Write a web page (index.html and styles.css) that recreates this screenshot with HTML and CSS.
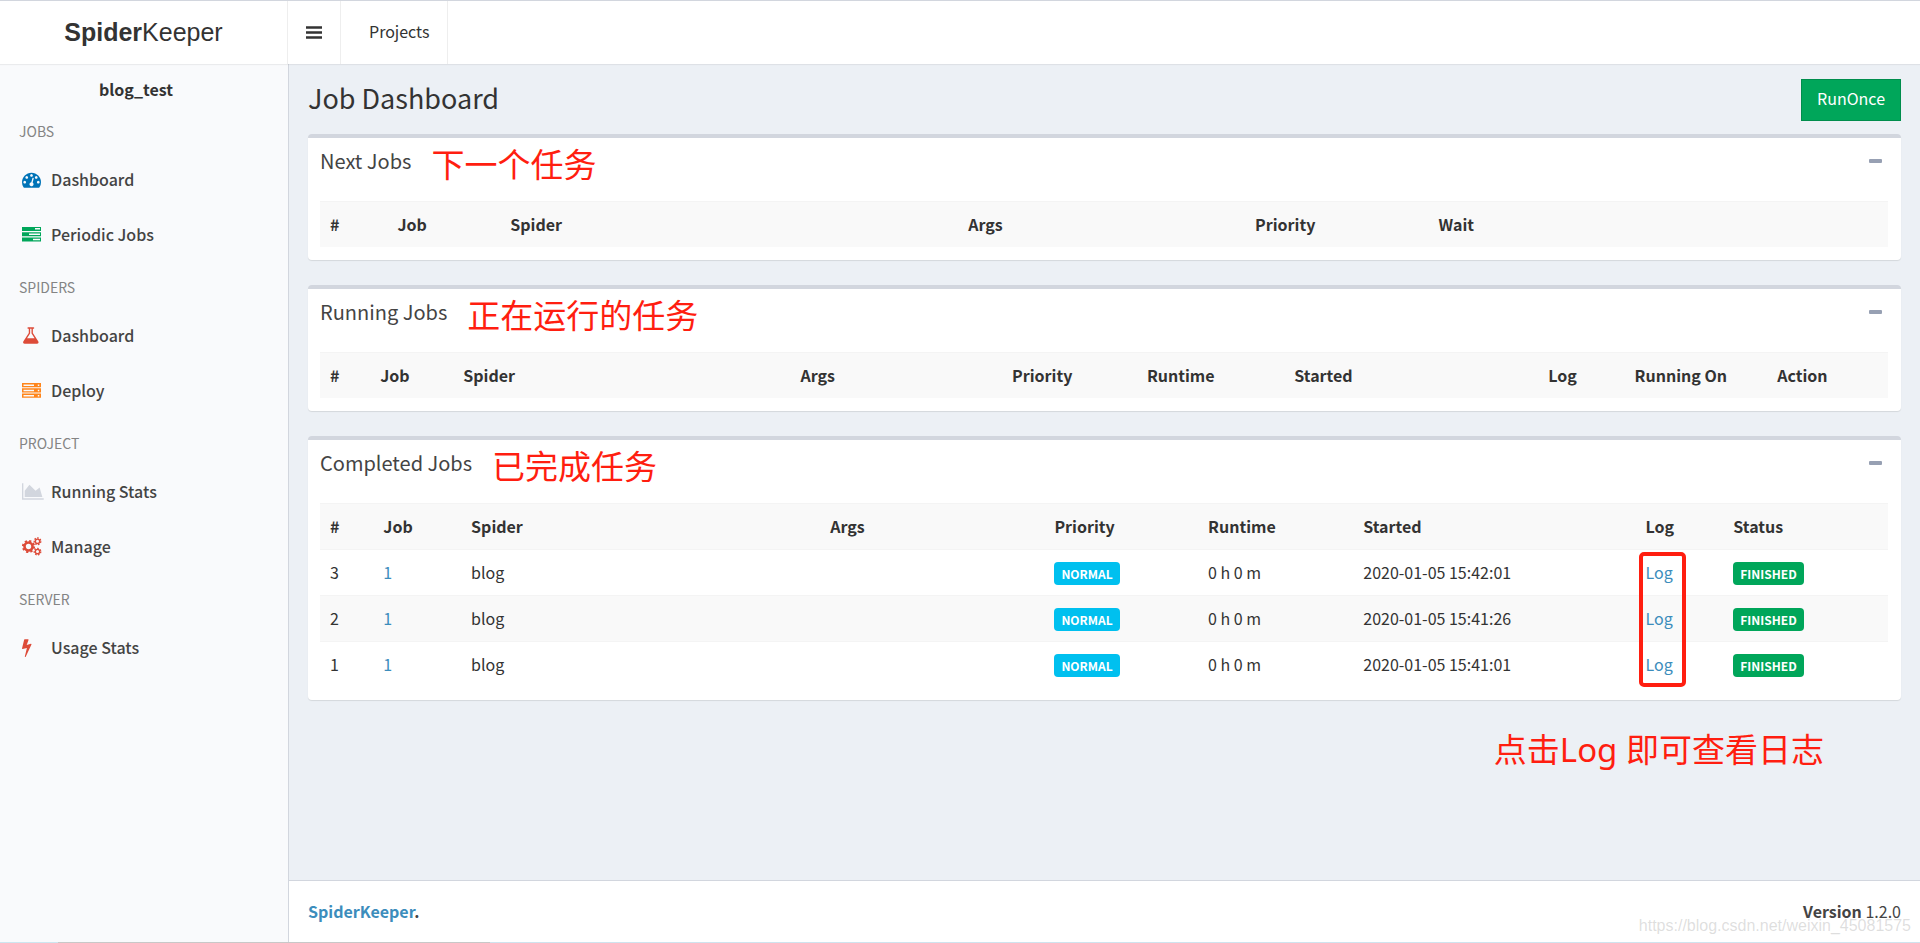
FILE: index.html
```html
<!DOCTYPE html>
<html lang="en">
<head>
<meta charset="utf-8">
<title>SpiderKeeper</title>
<link rel="stylesheet" href="styles.css">
</head>
<body>
<div class="wrapper">
  <header class="main-header">
    <a class="logo" href="#"><b>Spider</b>Keeper</a>
    <nav class="navbar">
      <button class="toggle" type="button" aria-label="Toggle navigation">
        <svg class="bars" viewBox="0 0 16 13"><path d="M0 0.300h16v2.400H0zM0 5.300h16v2.400H0zM0 10.300h16v2.400H0z"/></svg>
      </button>
      <a class="nav-link" href="#">Projects</a>
    </nav>
  </header>
  <div class="columns">
    <aside class="sidebar">
      <p class="user-panel">blog_test</p>
      <ul class="menu">
        <li class="menu-header">JOBS</li>
        <li><a class="menu-item" href="#"><span class="slot blue"><svg class="icon" viewBox="0 0 1792 1792"><path d="M384 1152q0-53-37.500-90.500t-90.500-37.500-90.500 37.500-37.500 90.500 37.500 90.500 90.500 37.500 90.500-37.500 37.500-90.500zm192-448q0-53-37.500-90.500t-90.500-37.500-90.500 37.500-37.500 90.500 37.500 90.500 90.500 37.500 90.500-37.500 37.500-90.500zm428 481l101-382q6-26-7.500-48.500t-38.500-29.500-48 6.500-30 39.500l-101 382q-60 5-107 43.500t-63 98.500q-20 77 20 146t117 89 146-20 89-117q16-60-6-117t-72-91zm660-33q0-53-37.500-90.500t-90.500-37.500-90.500 37.500-37.500 90.500 37.500 90.500 90.500 37.500 90.500-37.500 37.500-90.500zm-640-640q0-53-37.500-90.500t-90.500-37.500-90.500 37.500-37.500 90.500 37.500 90.500 90.500 37.500 90.500-37.500 37.500-90.500zm448 192q0-53-37.500-90.500t-90.500-37.500-90.500 37.500-37.500 90.500 37.500 90.500 90.500 37.500 90.500-37.500 37.500-90.500zm320 448q0 261-141 483-19 29-54 29h-1402q-35 0-54-29-141-221-141-483 0-182 71-348t191-286 286-191 348-71 348 71 286 191 191 286 71 348z"/></svg></span>Dashboard</a></li>
        <li><a class="menu-item" href="#"><span class="slot green"><svg class="icon" viewBox="0 0 19 19"><path fill-rule="evenodd" d="M0 2h19v4H0zM13 3v1.500h5V3zM0 7.200h19v4H0zM7 8.500v1.500h11V8.500zM0 12.500h19v4H0zM11 13.800v1.500h7v-1.500z"/></svg></span>Periodic Jobs</a></li>
        <li class="menu-header">SPIDERS</li>
        <li><a class="menu-item" href="#"><span class="slot red"><svg class="icon" viewBox="64 0 1664 1792"><path d="M1591 1448q56 89 21.500 152.500t-140.500 63.500h-1152q-106 0-140.500-63.500t21.500-152.500l503-793v-399h-64q-26 0-45-19t-19-45 19-45 45-19h512q26 0 45 19t19 45-19 45-45 19h-64v399zm-779-725l-272 429h712l-272-429-20-31v-436h-128v436z"/></svg></span>Dashboard</a></li>
        <li><a class="menu-item" href="#"><span class="slot orange"><svg class="icon" viewBox="0 0 19 19"><path fill-rule="evenodd" d="M0 2h19v4.300H0zM1.500 3.400v1.500h10.500V3.400zM15.800 3.400v1.500h1.500V3.400zM0 7.300h19v4.300H0zM1.500 8.700v1.500h10.500V8.700zM15.800 8.700v1.500h1.500V8.700zM0 12.500h19v4.300H0zM1.500 13.900v1.500h10.500v-1.500zM15.800 13.900v1.500h1.500v-1.500z"/></svg></span>Deploy</a></li>
        <li class="menu-header">PROJECT</li>
        <li><a class="menu-item" href="#"><span class="slot gray"><svg class="icon" viewBox="0 0 2048 1792"><path d="M2048 1536v128h-2048v-1536h128v1408h1920zm-384-1024l256 896h-1664v-576l448-576 576 576z"/></svg></span>Running Stats</a></li>
        <li><a class="menu-item" href="#"><span class="slot red"><svg class="icon" viewBox="0 0 20 19"><g fill="none" stroke="currentColor"><circle cx="6.500" cy="9.500" r="4" stroke-width="2.600"/><circle cx="6.500" cy="9.500" r="5.600" stroke-width="2" stroke-dasharray="2.200 2.198"/><circle cx="15.500" cy="4.300" r="2.200" stroke-width="1.400"/><circle cx="15.500" cy="4.300" r="3.300" stroke-width="1.300" stroke-dasharray="1.600 1.362"/><circle cx="15.500" cy="14.600" r="2.200" stroke-width="1.400"/><circle cx="15.500" cy="14.600" r="3.300" stroke-width="1.300" stroke-dasharray="1.600 1.362"/></g></svg></span>Manage</a></li>
        <li class="menu-header">SERVER</li>
        <li><a class="menu-item" href="#"><span class="slot red"><svg class="icon" viewBox="448 0 896 1792"><path d="M1333 566q18 20 7 44l-540 1157q-13 25-42 25-4 0-14-2-17-5-25.500-19t-4.500-30l197-808-406 101q-4 1-12 1-18 0-31-11-18-15-13-39l201-825q4-14 16-23t28-9h328q19 0 32 12.500t13 29.500q0 8-5 18l-171 463 396-98q8-2 12-2 19 0 34 15z"/></svg></span>Usage Stats</a></li>
      </ul>
    </aside>
    <div class="page">
      <main class="content">
        <div class="content-header">
          <h1>Job Dashboard</h1>
          <button class="run" type="button">RunOnce</button>
        </div>
        <section class="box">
          <div class="box-header"><h2>Next Jobs</h2><span class="note">下一个任务</span><button class="collapse" type="button" aria-label="Collapse"><svg class="minus" viewBox="0 0 13 4"><rect width="13" height="4" rx="1"/></svg></button></div>
          <table class="next">
            <colgroup><col class="n1"><col class="n2"><col class="n3"><col class="n4"><col class="n5"><col></colgroup>
            <tbody><tr><th>#</th><th>Job</th><th>Spider</th><th>Args</th><th>Priority</th><th>Wait</th></tr></tbody>
          </table>
        </section>
        <section class="box">
          <div class="box-header"><h2>Running Jobs</h2><span class="note">正在运行的任务</span><button class="collapse" type="button" aria-label="Collapse"><svg class="minus" viewBox="0 0 13 4"><rect width="13" height="4" rx="1"/></svg></button></div>
          <table class="running">
            <colgroup><col class="r1"><col class="r2"><col class="r3"><col class="r4"><col class="r5"><col class="r6"><col class="r7"><col class="r8"><col class="r9"><col></colgroup>
            <tbody><tr><th>#</th><th>Job</th><th>Spider</th><th>Args</th><th>Priority</th><th>Runtime</th><th>Started</th><th>Log</th><th>Running On</th><th>Action</th></tr></tbody>
          </table>
        </section>
        <section class="box">
          <div class="box-header"><h2>Completed Jobs</h2><span class="note">已完成任务</span><button class="collapse" type="button" aria-label="Collapse"><svg class="minus" viewBox="0 0 13 4"><rect width="13" height="4" rx="1"/></svg></button></div>
          <table class="completed">
            <colgroup><col class="c1"><col class="c2"><col class="c3"><col class="c4"><col class="c5"><col class="c6"><col class="c7"><col class="c8"><col></colgroup>
            <tbody>
              <tr><th>#</th><th>Job</th><th>Spider</th><th>Args</th><th>Priority</th><th>Runtime</th><th>Started</th><th>Log</th><th>Status</th></tr>
              <tr><td>3</td><td><a href="#">1</a></td><td>blog</td><td></td><td><span class="label info">NORMAL</span></td><td>0 h 0 m</td><td>2020-01-05 15:42:01</td><td class="marked"><a href="#">Log</a><span class="marker"></span></td><td><span class="label success">FINISHED</span></td></tr>
              <tr><td>2</td><td><a href="#">1</a></td><td>blog</td><td></td><td><span class="label info">NORMAL</span></td><td>0 h 0 m</td><td>2020-01-05 15:41:26</td><td><a href="#">Log</a></td><td><span class="label success">FINISHED</span></td></tr>
              <tr><td>1</td><td><a href="#">1</a></td><td>blog</td><td></td><td><span class="label info">NORMAL</span></td><td>0 h 0 m</td><td>2020-01-05 15:41:01</td><td><a href="#">Log</a></td><td><span class="label success">FINISHED</span></td></tr>
            </tbody>
          </table>
        </section>
        <p class="note hint">点击Log 即可查看日志</p>
      </main>
      <footer class="footer">
        <strong><a href="#">SpiderKeeper</a>.</strong>
        <span><b>Version</b> 1.2.0</span>
      </footer>
    </div>
  </div>
  <div class="edge"></div>
  <span class="watermark">https://blog.csdn.net/weixin_45081575</span>
</div>
</body>
</html>
```
FILE: styles.css
```css
* { box-sizing: border-box; }
body {
  margin: 0;
  font: 16px/25px "Noto Sans CJK SC", sans-serif;
  color: #333;
  background: #fff;
}
a { color: #3c8dbc; text-decoration: none; }
button { font: inherit; cursor: pointer; }
h1, h2, p, ul { margin: 0; padding: 0; font-weight: 400; }
.wrapper {
  position: relative;
  display: flex;
  flex-direction: column;
  min-height: 100vh;
  border-top: 1px solid #d2d6de;
}
.main-header {
  position: relative;
  display: flex;
  height: 63px;
  background: #fff;
  box-shadow: 0 1px 1px rgba(0, 0, 0, 0.06);
}
.logo {
  width: 288px;
  border-right: 1px solid #eee;
  font: 25px/62px "Liberation Sans", Arial, sans-serif;
  text-align: center;
  color: #333;
}
.navbar { display: flex; }
.toggle {
  display: flex;
  align-items: center;
  padding: 0 18px;
  border: 0;
  border-right: 1px solid #eee;
  background: none;
  color: #333;
}
.bars { width: 16px; height: 13px; fill: currentColor; }
.nav-link {
  padding: 0 18px 0 28px;
  border-right: 1px solid #eee;
  line-height: 60px;
  color: #333;
}
.columns { display: flex; flex: 1; }
.sidebar {
  flex: none;
  width: 289px;
  border-right: 1px solid #d2d6de;
  background: #f9fafc;
}
.user-panel {
  padding: 13px 16px 4px 0;
  font-weight: 700;
  text-align: center;
}
.menu { list-style: none; }
.menu-header {
  padding: 13px 19px 9px;
  font-size: 14px;
  line-height: 24px;
  color: #848484;
}
.menu-item {
  display: flex;
  align-items: center;
  height: 55px;
  padding-left: 22px;
  font-weight: 500;
  color: #444;
}
.slot { display: flex; width: 29px; }
.icon { height: 19px; fill: currentColor; }
.blue { color: #0073b7; }
.green { color: #00a65a; }
.red { color: #dd4b39; }
.orange { color: #ff851b; }
.gray { color: #d2d6de; }
.page {
  display: flex;
  flex: 1;
  flex-direction: column;
  min-width: 0;
  background: #ecf0f5;
}
.content { flex: 1; padding: 15px 19px 0; }
.content-header {
  display: flex;
  align-items: flex-start;
  justify-content: space-between;
  margin-bottom: 13px;
}
.content-header h1 { font-size: 27px; line-height: 38px; }
.run {
  height: 42px;
  padding: 0 15px 3px;
  border: 1px solid #008d4c;
  background: #00a65a;
  color: #fff;
}
.box {
  margin-bottom: 25px;
  padding: 0 13px 13px 12px;
  border-top: 4px solid #d2d6de;
  border-radius: 4px;
  background: #fff;
  box-shadow: 0 1px 1px rgba(0, 0, 0, 0.1);
}
.box-header {
  display: flex;
  align-items: center;
  gap: 20px;
  height: 63px;
  padding-bottom: 17px;
}
.box-header h2 { font-size: 20px; line-height: 28px; color: #444; }
.note {
  padding-top: 6px;
  font-family: "Noto Sans", "Noto Sans CJK SC", sans-serif;
  font-size: 33px;
  line-height: 49px;
  color: #ff1e10;
}
.hint { padding: 0 77px 0 0; text-align: right; }
.collapse {
  display: flex;
  margin-left: auto;
  padding: 6px;
  border: 0;
  background: none;
}
.minus { width: 13px; height: 4px; fill: #97a0b3; }
table { width: 100%; table-layout: fixed; border-collapse: separate; border-spacing: 0; }
th, td { height: 46px; padding: 10px; border-top: 1px solid #f4f4f4; text-align: left; line-height: 25px; }
th { font-weight: 700; }
tr:nth-child(odd) { background: #f9f9f9; }
.n1 { width: 4.3%; } .n2 { width: 7.2%; } .n3 { width: 29.2%; } .n4 { width: 18.3%; } .n5 { width: 11.7%; }
.r1 { width: 3.2%; } .r2 { width: 5.3%; } .r3 { width: 21.5%; } .r4 { width: 13.5%; } .r5 { width: 8.6%; }
.r6 { width: 9.4%; } .r7 { width: 16.2%; } .r8 { width: 5.5%; } .r9 { width: 9.1%; }
.c1 { width: 3.4%; } .c2 { width: 5.6%; } .c3 { width: 22.9%; } .c4 { width: 14.3%; } .c5 { width: 9.8%; }
.c6 { width: 9.9%; } .c7 { width: 18%; } .c8 { width: 5.6%; }
.label {
  padding: 3px 7px;
  border-radius: 4px;
  font-size: 12px;
  font-weight: 700;
  line-height: 12px;
  color: #fff;
}
.info { background: #00c0ef; }
.success { background: #00a65a; }
.marked { position: relative; }
.marker {
  position: absolute;
  top: 2px;
  left: 4px;
  width: 47px;
  height: 135px;
  border: 4px solid #ff1e10;
  border-radius: 5px;
  pointer-events: none;
}
.footer {
  display: flex;
  justify-content: space-between;
  padding: 18px 19px;
  border-top: 1px solid #d2d6de;
  background: #fff;
  color: #444;
}
.edge {
  height: 1px;
  background: linear-gradient(90deg, #cde6f0 3%, #c8c8c8 3%, #c8c8c8 25.5%, #cfe3ee 25.5%);
}
.watermark {
  position: absolute;
  right: 9px;
  bottom: 7px;
  font: 16px/20px "Liberation Sans", Arial, sans-serif;
  color: rgba(160, 160, 160, 0.35);
}
```
